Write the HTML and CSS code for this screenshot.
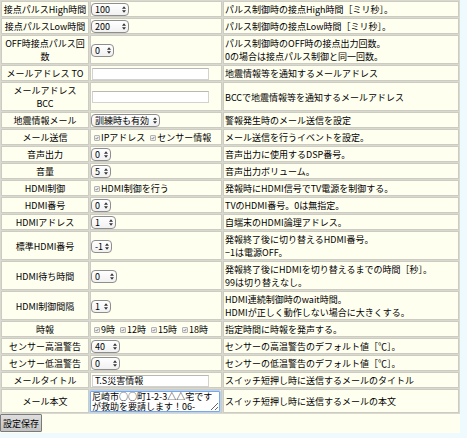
FILE: index.html
```html
<!DOCTYPE html>
<html lang="ja">
<head>
<meta charset="utf-8">
<title>設定</title>
<link rel="stylesheet" href="styles.css">
</head>
<body>
<form class="page">
<table class="grid">
<colgroup><col class="c1"><col class="c2"><col class="c3"></colgroup>
<tr><th>接点パルスHigh時間</th><td class="ctl"><span class="sel w38"><select><option>100</option></select><svg class="arr" viewBox="0 0 5 8"><path d="M2.5 0L5 3H0ZM2.5 8L5 5H0Z"/></svg></span></td><td class="desc">パルス制御時の接点High時間［ミリ秒］。</td></tr>
<tr><th>接点パルスLow時間</th><td class="ctl"><span class="sel w38"><select><option>200</option></select><svg class="arr" viewBox="0 0 5 8"><path d="M2.5 0L5 3H0ZM2.5 8L5 5H0Z"/></svg></span></td><td class="desc">パルス制御時の接点Low時間［ミリ秒］。</td></tr>
<tr><th>OFF時接点パルス回<br>数</th><td class="ctl"><span class="sel w23"><select><option>0</option></select><svg class="arr" viewBox="0 0 5 8"><path d="M2.5 0L5 3H0ZM2.5 8L5 5H0Z"/></svg></span></td><td class="desc">パルス制御時のOFF時の接点出力回数。<br>0の場合は接点パルス制御と同一回数。</td></tr>
<tr><th>メールアドレス TO</th><td class="ctl"><input class="txt" type="text" value=""></td><td class="desc">地震情報等を通知するメールアドレス</td></tr>
<tr><th>メールアドレス<br>BCC</th><td class="ctl"><input class="txt" type="text" value=""></td><td class="desc">BCCで地震情報等を通知するメールアドレス</td></tr>
<tr><th>地震情報メール</th><td class="ctl"><span class="sel w69"><select><option>訓練時も有効</option></select><svg class="arr" viewBox="0 0 5 8"><path d="M2.5 0L5 3H0ZM2.5 8L5 5H0Z"/></svg></span></td><td class="desc">警報発生時のメール送信を設定</td></tr>
<tr><th>メール送信</th><td class="ctl"><div class="checks"><label class="opt"><span class="cb"><svg viewBox="0 0 6 6"><path d="M1 3.2L2.4 4.6L5 1.4"/></svg></span>IPアドレス</label><label class="opt"><span class="cb"><svg viewBox="0 0 6 6"><path d="M1 3.2L2.4 4.6L5 1.4"/></svg></span>センサー情報</label></div></td><td class="desc">メール送信を行うイベントを設定。</td></tr>
<tr><th>音声出力</th><td class="ctl"><span class="sel w20"><select><option>0</option></select><svg class="arr" viewBox="0 0 5 8"><path d="M2.5 0L5 3H0ZM2.5 8L5 5H0Z"/></svg></span></td><td class="desc">音声出力に使用するDSP番号。</td></tr>
<tr><th>音量</th><td class="ctl"><span class="sel w20"><select><option>5</option></select><svg class="arr" viewBox="0 0 5 8"><path d="M2.5 0L5 3H0ZM2.5 8L5 5H0Z"/></svg></span></td><td class="desc">音声出力ボリューム。</td></tr>
<tr><th>HDMI制御</th><td class="ctl"><div class="checks"><label class="opt"><span class="cb"><svg viewBox="0 0 6 6"><path d="M1 3.2L2.4 4.6L5 1.4"/></svg></span>HDMI制御を行う</label></div></td><td class="desc">発報時にHDMI信号でTV電源を制御する。</td></tr>
<tr><th>HDMI番号</th><td class="ctl"><span class="sel w20"><select><option>0</option></select><svg class="arr" viewBox="0 0 5 8"><path d="M2.5 0L5 3H0ZM2.5 8L5 5H0Z"/></svg></span></td><td class="desc">TVのHDMI番号。0は無指定。</td></tr>
<tr><th>HDMIアドレス</th><td class="ctl"><span class="sel w25"><select><option>1</option></select><svg class="arr" viewBox="0 0 5 8"><path d="M2.5 0L5 3H0ZM2.5 8L5 5H0Z"/></svg></span></td><td class="desc">自端末のHDMI論理アドレス。</td></tr>
<tr><th>標準HDMI番号</th><td class="ctl"><span class="sel w21"><select><option>-1</option></select><svg class="arr" viewBox="0 0 5 8"><path d="M2.5 0L5 3H0ZM2.5 8L5 5H0Z"/></svg></span></td><td class="desc">発報終了後に切り替えるHDMI番号。<br>−1は電源OFF。</td></tr>
<tr><th>HDMI待ち時間</th><td class="ctl"><span class="sel w26"><select><option>0</option></select><svg class="arr" viewBox="0 0 5 8"><path d="M2.5 0L5 3H0ZM2.5 8L5 5H0Z"/></svg></span></td><td class="desc">発報終了後にHDMIを切り替えるまでの時間［秒］。<br>99は切り替えなし。</td></tr>
<tr><th>HDMI制御間隔</th><td class="ctl"><span class="sel w20"><select><option>1</option></select><svg class="arr" viewBox="0 0 5 8"><path d="M2.5 0L5 3H0ZM2.5 8L5 5H0Z"/></svg></span></td><td class="desc">HDMI連続制御時のwait時間。<br>HDMIが正しく動作しない場合に大きくする。</td></tr>
<tr><th>時報</th><td class="ctl"><div class="checks"><label class="opt"><span class="cb"><svg viewBox="0 0 6 6"><path d="M1 3.2L2.4 4.6L5 1.4"/></svg></span>9時</label><label class="opt"><span class="cb"><svg viewBox="0 0 6 6"><path d="M1 3.2L2.4 4.6L5 1.4"/></svg></span>12時</label><label class="opt"><span class="cb"><svg viewBox="0 0 6 6"><path d="M1 3.2L2.4 4.6L5 1.4"/></svg></span>15時</label><label class="opt"><span class="cb"><svg viewBox="0 0 6 6"><path d="M1 3.2L2.4 4.6L5 1.4"/></svg></span>18時</label></div></td><td class="desc">指定時間に時報を発声する。</td></tr>
<tr><th>センサー高温警告</th><td class="ctl"><span class="sel w29"><select><option>40</option></select><svg class="arr" viewBox="0 0 5 8"><path d="M2.5 0L5 3H0ZM2.5 8L5 5H0Z"/></svg></span></td><td class="desc">センサーの高温警告のデフォルト値［℃］。</td></tr>
<tr><th>センサー低温警告</th><td class="ctl"><span class="sel w29"><select><option>0</option></select><svg class="arr" viewBox="0 0 5 8"><path d="M2.5 0L5 3H0ZM2.5 8L5 5H0Z"/></svg></span></td><td class="desc">センサーの低温警告のデフォルト値［℃］。</td></tr>
<tr><th>メールタイトル</th><td class="ctl"><input class="txt" type="text" value="T.S災害情報"></td><td class="desc">スイッチ短押し時に送信するメールのタイトル</td></tr>
<tr><th>メール本文</th><td class="ctl"><textarea class="body-text">尼崎市○○町1-2-3△△宅ですが救助を要請します！06-</textarea></td><td class="desc">スイッチ短押し時に送信するメールの本文</td></tr>
</table>
<button type="button" class="save">設定保存</button>
</form>
</body>
</html>
```
FILE: styles.css
```css
html, body {
  margin: 0;
  padding: 0;
}
body {
  background: #eefafe;
  font-family: "Noto Sans CJK JP", "Noto Sans", sans-serif;
  font-size: 9px;
  color: #000;
}
.page {
  display: block;
  width: 460px;
  margin: 0;
  background: #fffff0;
  padding-bottom: 1px;
}
.grid {
  border-collapse: separate;
  border-spacing: 1px;
  background: #dad9cf;
  table-layout: fixed;
  width: 460px;
}
.c1 { width: 88px; }
.c2 { width: 132px; }
.c3 { width: 236px; }
.grid th,
.grid td {
  background: #fffff0;
  border: 1px solid #cdccc2;
  padding: 1px 1px 0 1px;
  line-height: 13px;
  height: 13px;
  font-weight: normal;
  vertical-align: middle;
}
.grid th {
  text-align: center;
  white-space: nowrap;
}
.grid td.ctl {
  padding-left: 0;
}
.desc {
  text-align: left;
  white-space: nowrap;
}
.sel {
  position: relative;
  display: flex;
  height: 13px;
}
.sel select {
  -webkit-appearance: none;
  appearance: none;
  width: 100%;
  height: 13px;
  margin: 0;
  padding: 0 0 0 3px;
  border: 1px solid #8e8e8e;
  border-radius: 4px;
  background: linear-gradient(#ffffff, #f1f1f1);
  font-family: inherit;
  font-size: 9px;
  line-height: 11px;
  color: #000;
  box-sizing: border-box;
}
.sel .arr {
  position: absolute;
  right: 3px;
  top: 3px;
  width: 4px;
  height: 7px;
  fill: #333;
  pointer-events: none;
}
.w20 { width: 20px; }
.w21 { width: 21px; }
.w23 { width: 23px; }
.w25 { width: 25px; }
.w26 { width: 26px; }
.w29 { width: 29px; }
.w38 { width: 38px; }
.w69 { width: 69px; }
.txt {
  display: block;
  box-sizing: border-box;
  width: 117px;
  height: 12px;
  margin: 0 0 0 1px;
  padding: 0 2px;
  border: 1px solid #d2d2d2;
  border-top-color: #b8b8b8;
  background: #fff;
  font-family: inherit;
  font-size: 9px;
  color: #000;
}
.checks {
  display: flex;
  align-items: center;
  height: 13px;
  padding-left: 3px;
  white-space: nowrap;
}
.opt {
  display: inline-flex;
  align-items: center;
  gap: 1px;
  margin-right: 5px;
}
.cb {
  display: inline-flex;
  align-items: center;
  justify-content: center;
  box-sizing: border-box;
  width: 6px;
  height: 6px;
  border: 1px solid #b3b3b3;
  border-radius: 1px;
  background: #efefef;
}
.cb svg {
  width: 4px;
  height: 4px;
  fill: none;
  stroke: #555;
  stroke-width: 1;
}
.body-text {
  display: block;
  box-sizing: border-box;
  width: 130px;
  height: 21px;
  margin: 0 0 0 -1px;
  padding: 0 1px;
  border: 1px solid #7aa9e6;
  box-shadow: 0 0 0 1px #b9d3f3;
  border-radius: 1px;
  background: #fff;
  font-family: inherit;
  font-size: 9px;
  line-height: 10px;
  color: #000;
  overflow: hidden;
  resize: both;
}
.save {
  display: block;
  height: 18px;
  margin: 0;
  padding: 0 2px;
  border: 1px solid #7a7a7a;
  border-radius: 1px;
  background: linear-gradient(#dedede, #c2c2c2);
  font-family: inherit;
  font-size: 9px;
  color: #000;
}
```
